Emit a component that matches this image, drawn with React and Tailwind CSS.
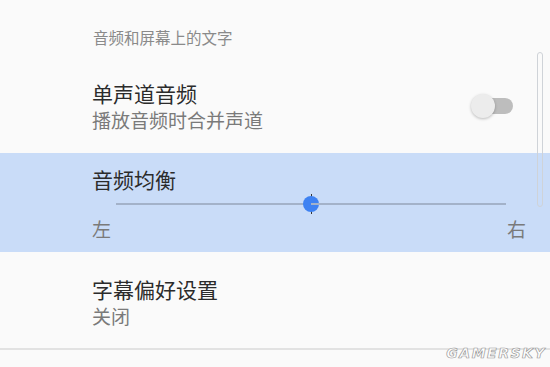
import React, { useState } from 'react';

const font = { fontFamily: '"Noto Sans CJK SC", "Noto Sans", sans-serif' };

function Toggle({ on }) {
  return (
    <div className="flex items-center w-[42px] h-[24px]">
      <div className="z-10 shrink-0 w-[24px] h-[24px] rounded-full bg-[#ececec] shadow-[0_1px_3px_rgba(0,0,0,0.25)]" />
      <div className="-ml-[12px] w-[30px] h-[16px] rounded-full bg-[#bdbdbd]" />
    </div>
  );
}

function Slider({ value }) {
  return (
    <div className="ml-[24px] w-[390px] h-[22px] flex items-center">
      <div className="h-[2px] bg-[#a3b2c9]" style={{ width: `${value}%` }} />
      <div className="grid place-items-center -mx-[8px] w-[16px] h-[22px] shrink-0">
        <div className="col-start-1 row-start-1 w-[1px] h-[20px] bg-[#333]" />
        <div className="col-start-1 row-start-1 w-[16px] h-[16px] rounded-full bg-[#3e82f2]" />
      </div>
      <div className="flex-1 h-[2px] bg-[#a3b2c9]" />
    </div>
  );
}

export default function App() {
  const [balance] = useState(50);

  return (
    <div className="relative w-[550px] h-[367px] overflow-hidden bg-[#fafafa]" style={font}>
      {/* section header */}
      <div className="pl-[93px] pt-[27px] text-[15.5px] leading-[20px] text-[#8a8a8a]">音频和屏幕上的文字</div>

      {/* mono audio */}
      <div className="mt-[32px] pl-[92px] pr-[37px] flex items-center justify-between">
        <div>
          <div className="text-[21px] leading-[28px] text-[#2b2b2b]">单声道音频</div>
          <div className="text-[19px] leading-[26px] text-[#7a7a7a]">播放音频时合并声道</div>
        </div>
        <Toggle on={false} />
      </div>

      {/* balance */}
      <div className="mt-[20px] bg-[#c9dcf8] pl-[92px] pr-[24px] pt-[12px] pb-[11px]">
        <div className="text-[21px] leading-[28px] text-[#2b2b2b]">音频均衡</div>
        <Slider value={balance} />
        <div className="mt-[2px] flex justify-between text-[19px] leading-[24px] text-[#7a7a7a]">
          <span>左</span>
          <span>右</span>
        </div>
      </div>

      {/* captions */}
      <div className="pl-[92px] pt-[23px]">
        <div className="text-[21px] leading-[28px] text-[#2b2b2b]">字幕偏好设置</div>
        <div className="text-[19px] leading-[26px] text-[#7a7a7a]">关闭</div>
      </div>

      <div className="mt-[19px] h-[2px] bg-[#e2e2e2]" />

      {/* scrollbar */}
      <div className="absolute left-[537px] top-[52px] w-[6px] h-[155px] rounded-full border border-[#cfd3d8]" />

      {/* watermark */}
      <div className="absolute right-[4px] bottom-[3px] text-[14px] font-black italic tracking-[1.5px] text-white [-webkit-text-stroke:0.7px_#9a9a9a]" style={{ fontFamily: '"DejaVu Sans", sans-serif' }}>
        GAMERSKY
      </div>
    </div>
  );
}
